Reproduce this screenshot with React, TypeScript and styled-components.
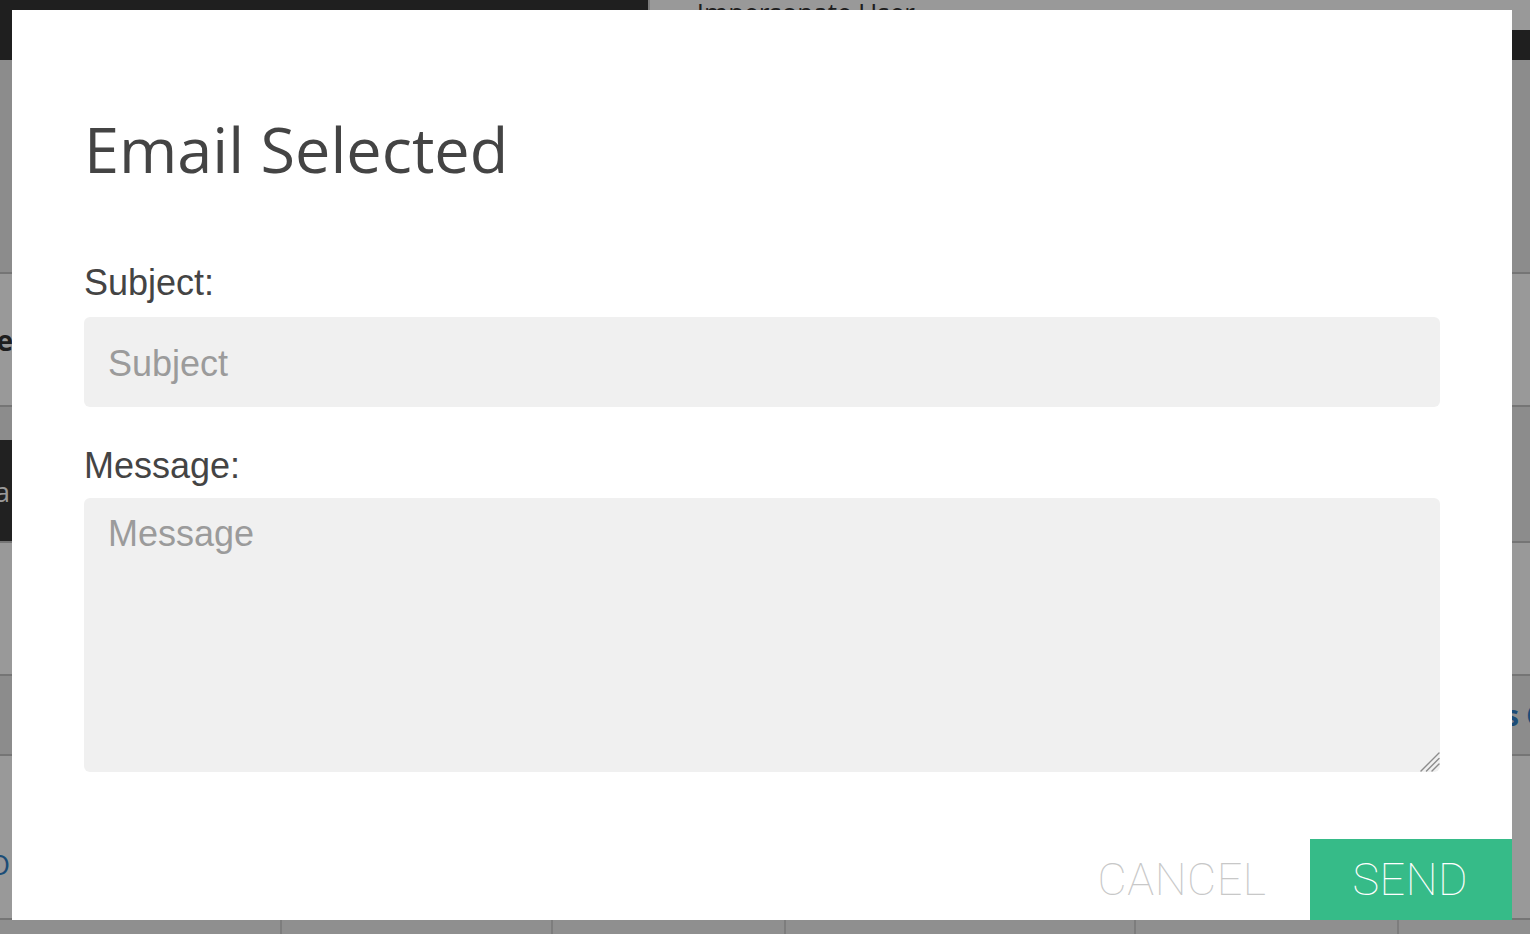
import { createGlobalStyle } from "styled-components";
import styled from "styled-components";

const GlobalStyle = createGlobalStyle`
  html, body {
    margin: 0;
    padding: 0;
    overflow: hidden;
    background: #ffffff;
  }
  body {
    font-family: "Open Sans", "Liberation Sans", sans-serif;
  }
  * {
    box-sizing: border-box;
  }
`

const Page = styled.div`
  width: 1530px;
  height: 934px;
  overflow: hidden;
  display: flex;
  flex-direction: column;
`

const TopBar = styled.header`
  height: 60px;
  flex: none;
  background: #343434;
  display: flex;
  align-items: flex-start;
  padding-left: 648px;
`

const ImpersonateSelect = styled.div`
  flex: 1;
  height: 30px;
  background: #ffffff;
  border-left: 2px solid #cfcfcf;
  padding-left: 15px;
  font-size: 26px;
  line-height: 24px;
  color: #333;
  white-space: nowrap;
  overflow: hidden;
`

const BgRow = styled.div<{ $height: number; $tone: "white" | "grey"; $align?: string }>`
  height: ${(p) => p.$height}px;
  flex: none;
  display: flex;
  align-items: ${(p) => p.$align || "center"};
  background: ${(p) => (p.$tone === "grey" ? "#e9e9e9" : "#ffffff")};
  border-bottom: 2px solid #c4c4c4;
`

const LeftStub = styled.div<{ $width?: number; $color?: string; $bold?: boolean }>`
  width: ${(p) => p.$width || 12}px;
  flex: none;
  display: flex;
  justify-content: flex-end;
  white-space: nowrap;
  font-size: 28px;
  font-weight: ${(p) => (p.$bold ? 700 : 400)};
  color: ${(p) => p.$color || "#333"};
`

const RightStub = styled.div<{ $color?: string }>`
  margin-left: auto;
  width: 25px;
  flex: none;
  white-space: nowrap;
  font-size: 28px;
  font-weight: 700;
  color: ${(p) => p.$color || "#333"};
`

const DarkBlock = styled.div`
  height: 101px;
  width: 40px;
  background: #383838;
  display: flex;
  align-items: center;
`

const TableHead = styled.div`
  flex: 1;
  display: flex;
  background: #eeeeee;
`

const HeadCell = styled.div<{ $width: number }>`
  width: ${(p) => p.$width}px;
  flex: none;
  border-right: 2px solid #d0d0d0;
`

const Overlay = styled.div`
  position: fixed;
  inset: 0;
  background: rgba(0, 0, 0, 0.4);
  padding: 10px 0 0 12px;
`

const Modal = styled.div`
  width: 1500px;
  height: 910px;
  background: #ffffff;
  display: flex;
  flex-direction: column;
`

const Body = styled.div`
  padding: 102px 72px 0 72px;
`

const Title = styled.h2`
  margin: 0;
  font-family: "Open Sans", sans-serif;
  font-weight: 400;
  font-size: 63px;
  line-height: 74px;
  color: #444444;
`

const Field = styled.div<{ $top: number }>`
  margin-top: ${(p) => p.$top}px;
  display: flex;
  flex-direction: column;
`

const Label = styled.label<{ $gap: number }>`
  font-family: "Liberation Sans", Arial, sans-serif;
  font-size: 36px;
  line-height: 40px;
  color: #444444;
  margin-bottom: ${(p) => p.$gap}px;
`

const TextInput = styled.input`
  height: 90px;
  width: 100%;
  border: none;
  outline: none;
  border-radius: 6px;
  background: #f0f0f0;
  padding: 4px 24px 0 24px;
  font-family: "Liberation Sans", Arial, sans-serif;
  font-size: 36px;
  color: #333;
  &::placeholder {
    color: #9b9b9b;
  }
`

const AreaWrap = styled.div`
  position: relative;
`

const TextArea = styled.textarea`
  height: 274px;
  width: 100%;
  border: none;
  outline: none;
  border-radius: 6px;
  background: #f0f0f0;
  padding: 16px 24px;
  font-family: "Liberation Sans", Arial, sans-serif;
  font-size: 36px;
  line-height: 40px;
  color: #333;
  resize: none;
  display: block;
  &::placeholder {
    color: #9b9b9b;
  }
`

const Grip = styled.svg`
  position: absolute;
  right: 0;
  bottom: 0;
  width: 22px;
  height: 22px;
  pointer-events: none;
`

const Footer = styled.div`
  margin-top: auto;
  display: flex;
  justify-content: flex-end;
`

const ActionButton = styled.button<{ $primary?: boolean }>`
  height: 81px;
  padding: 0 ${(p) => (p.$primary ? "44px 0 42px" : "44px")};
  border: none;
  border-radius: 0;
  background: ${(p) => (p.$primary ? "#36bb88" : "transparent")};
  color: ${(p) => (p.$primary ? "#ffffff" : "#c8c8c8")};
  font-family: Roboto, "Liberation Sans", sans-serif;
  font-weight: 100;
  font-size: 45px;
  letter-spacing: 0.5px;
  cursor: pointer;
`

const App = () => {
  return (
    <>
      <GlobalStyle />
      <Page>
        <TopBar>
          <ImpersonateSelect>--- Impersonate User ---</ImpersonateSelect>
        </TopBar>
        <BgRow $height={214} $tone="grey" />
        <BgRow $height={133} $tone="white">
          <LeftStub $width={13} $bold>Complete</LeftStub>
        </BgRow>
        <BgRow $height={136} $tone="grey" $align="flex-end">
          <DarkBlock>
            <LeftStub $width={10} $color="#ffffff">Data</LeftStub>
          </DarkBlock>
        </BgRow>
        <BgRow $height={133} $tone="white" />
        <BgRow $height={80} $tone="grey">
          <RightStub $color="#2f7fc6">s Overview</RightStub>
        </BgRow>
        <BgRow $height={164} $tone="white">
          <LeftStub $width={10} $color="#2f7fc6" style={{ paddingTop: 54 }}>
            O
          </LeftStub>
        </BgRow>
        <TableHead>
          <HeadCell $width={282} />
          <HeadCell $width={271} />
          <HeadCell $width={233} />
          <HeadCell $width={350} />
          <HeadCell $width={263} />
        </TableHead>
      </Page>
      <Overlay>
        <Modal>
          <Body>
            <Title>Email Selected</Title>
            <Field $top={77}>
              <Label $gap={14}>Subject:</Label>
              <TextInput placeholder="Subject" />
            </Field>
            <Field $top={39}>
              <Label $gap={12}>Message:</Label>
              <AreaWrap>
                <TextArea placeholder="Message" />
                <Grip viewBox="0 0 22 22">
                  <g stroke="#8c8c8c" strokeWidth="1.4" strokeLinecap="round">
                    <line x1="21" y1="3" x2="3" y2="21" />
                    <line x1="21" y1="8.5" x2="8.5" y2="21" />
                    <line x1="21" y1="14" x2="14" y2="21" />
                  </g>
                </Grip>
              </AreaWrap>
            </Field>
          </Body>
          <Footer>
            <ActionButton>CANCEL</ActionButton>
            <ActionButton $primary>SEND</ActionButton>
          </Footer>
        </Modal>
      </Overlay>
    </>
  )
}

export default App
